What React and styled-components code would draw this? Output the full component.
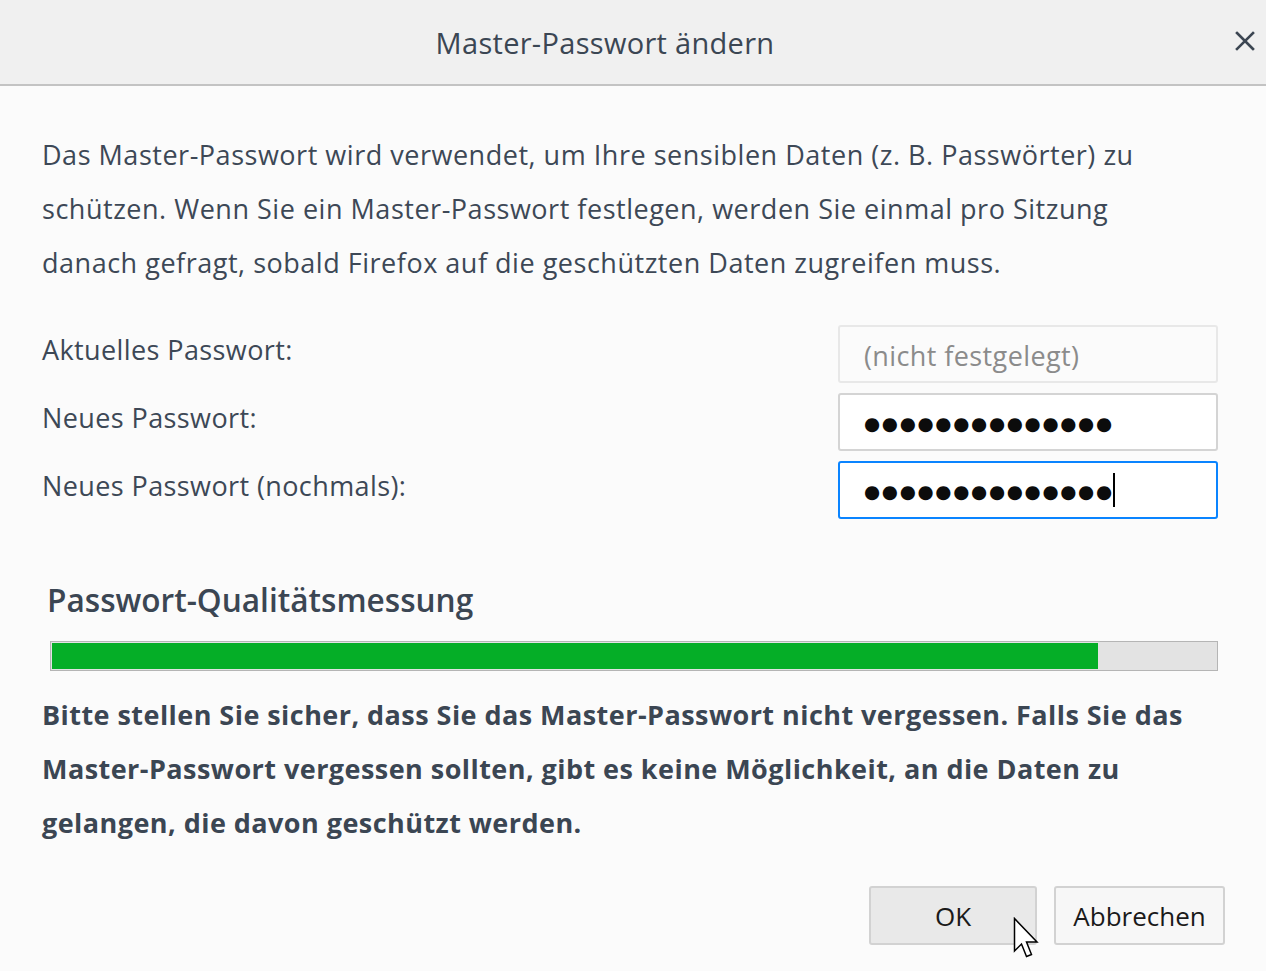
import styled, { createGlobalStyle } from "styled-components";

const GlobalStyle = createGlobalStyle`
  html, body {
    margin: 0;
    padding: 0;
    background: #fbfbfb;
  }
  * {
    box-sizing: border-box;
  }
`;

const FONT = `"Open Sans", "Noto Sans", "DejaVu Sans", sans-serif`;

const App = () => {
  return (
    <>
      <GlobalStyle />
      <Dialog>
        <Header>
          <Title>Master-Passwort ändern</Title>
          <CloseButton aria-label="Schließen">
            <svg width="20" height="20" viewBox="0 0 20 20">
              <path d="M2 2 L18 18 M18 2 L2 18" stroke="#3c4652" strokeWidth="2.6" strokeLinecap="square" />
            </svg>
          </CloseButton>
        </Header>
        <Body>
          <Intro>
            Das Master-Passwort wird verwendet, um Ihre sensiblen Daten (z. B. Passwörter) zu
            <br />
            schützen. Wenn Sie ein Master-Passwort festlegen, werden Sie einmal pro Sitzung
            <br />
            danach gefragt, sobald Firefox auf die geschützten Daten zugreifen muss.
          </Intro>
          <Form>
            <Label>Aktuelles Passwort:</Label>
            <Field $variant="disabled">
              <Placeholder>(nicht festgelegt)</Placeholder>
            </Field>
            <Label>Neues Passwort:</Label>
            <Field>
              <Dots>{"●".repeat(14)}</Dots>
            </Field>
            <Label>Neues Passwort (nochmals):</Label>
            <Field $variant="focus">
              <Dots>{"●".repeat(14)}</Dots>
              <Caret />
            </Field>
          </Form>
          <MeterTitle>Passwort-Qualitätsmessung</MeterTitle>
          <Meter>
            <MeterFill style={{ width: "89.9%" }} />
          </Meter>
          <Warning>
            Bitte stellen Sie sicher, dass Sie das Master-Passwort nicht vergessen. Falls Sie das
            <br />
            Master-Passwort vergessen sollten, gibt es keine Möglichkeit, an die Daten zu
            <br />
            gelangen, die davon geschützt werden.
          </Warning>
          <Footer>
            <Button $hover $width={168}>OK</Button>
            <Button $width={171}>Abbrechen</Button>
          </Footer>
        </Body>
        <Pointer width="26" height="42" viewBox="0 0 26 42">
          <path
            d="M1.5 1.5 V34 L8.5 27 L13.5 39.5 L18.5 37.5 L13.5 25 H24 Z"
            fill="#fff"
            stroke="#000"
            strokeWidth="1.5"
            strokeLinejoin="miter"
          />
        </Pointer>
      </Dialog>
    </>
  );
};

export default App;

const Dialog = styled.div`
  position: relative;
  width: 1266px;
  height: 971px;
  background: #fbfbfb;
  font-family: ${FONT};
  color: #3d4856;
  overflow: hidden;
`;

const Header = styled.div`
  position: relative;
  display: flex;
  align-items: center;
  justify-content: center;
  height: 86px;
  padding-right: 56px;
  background: #f0f0f0;
  border-bottom: 2px solid #c3c3c3;
`;

const Title = styled.h1`
  margin: 0;
  font-size: 29px;
  font-weight: 400;
  color: #3b4653;
  letter-spacing: 0.3px;
`;

const CloseButton = styled.button`
  position: absolute;
  right: 11px;
  top: 31px;
  width: 20px;
  height: 20px;
  padding: 0;
  border: none;
  background: transparent;
  display: flex;
`;

const Body = styled.div`
  padding: 42px 48px 0 42px;
  display: flex;
  flex-direction: column;
`;

const Intro = styled.p`
  margin: 0;
  font-size: 27px;
  letter-spacing: 0.52px;
  line-height: 54px;
  white-space: nowrap;
`;

const Form = styled.div`
  display: grid;
  grid-template-columns: 1fr 380px;
  row-gap: 10px;
  margin-top: 35px;
`;

const Label = styled.div`
  font-size: 27px;
  letter-spacing: 0.4px;
  line-height: 40px;
  padding-top: 5px;
`;

const Field = styled.div`
  position: relative;
  display: flex;
  align-items: center;
  height: 58px;
  padding-left: 24px;
  background: ${({ $variant }) => ($variant === "disabled" ? "#fbfbfb" : "#fff")};
  border: ${({ $variant }) =>
    $variant === "focus"
      ? "2px solid #0a84ff"
      : $variant === "disabled"
      ? "2px solid #e8e8e8"
      : "2px solid #d4d4d4"};
  border-radius: 3px;
`;

const Placeholder = styled.span`
  font-size: 27px;
  letter-spacing: 0.4px;
  color: #8b8b8b;
  margin-top: 2px;
`;

const Dots = styled.span`
  font-family: "DejaVu Sans", sans-serif;
  font-size: 18.5px;
  letter-spacing: 1.7px;
  color: #0c0c0c;
  margin-top: 2px;
`;

const Caret = styled.span`
  width: 2px;
  height: 34px;
  background: #000;
  margin-left: -1px;
`;

const MeterTitle = styled.h2`
  margin: 59px 0 0 5px;
  font-size: 31.6px;
  font-weight: 600;
  line-height: 44px;
  color: #3b4653;
`;

const Meter = styled.div`
  margin: 19px 0 0 8px;
  height: 30px;
  background: #e3e3e3;
  border: 1px solid #b5b5b5;
  padding: 1px;
`;

const MeterFill = styled.div`
  height: 100%;
  background: #05ae27;
`;

const Warning = styled.p`
  margin: 17px 0 0;
  font-size: 27px;
  font-weight: 700;
  letter-spacing: 0.45px;
  line-height: 54px;
  white-space: nowrap;
  color: #3b4653;
`;

const Footer = styled.div`
  display: flex;
  justify-content: flex-end;
  gap: 17px;
  margin: 36px -7px 0 0;
`;

const Button = styled.button`
  height: 59px;
  width: ${({ $width }) => $width}px;
  padding: 0;
  font-family: ${FONT};
  font-size: 26px;
  color: #1a1a1a;
  background: ${({ $hover }) => ($hover ? "#e9e9e9" : "#f7f7f7")};
  border: 2px solid #d2d2d2;
  border-radius: 3px;
`;

const Pointer = styled.svg`
  position: absolute;
  left: 1013px;
  top: 917px;
`;
